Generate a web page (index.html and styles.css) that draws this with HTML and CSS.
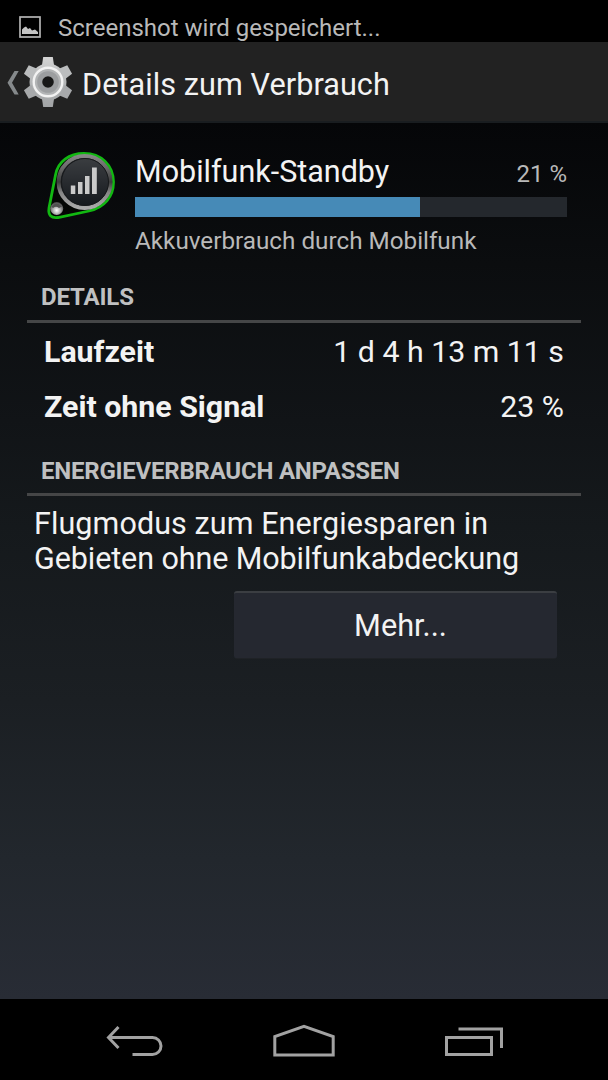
FILE: index.html
```html
<!DOCTYPE html>
<html lang="de">
<head>
<meta charset="utf-8">
<title>Details zum Verbrauch</title>
<link rel="stylesheet" href="styles.css">
</head>
<body>
<div class="screen">
  <div class="statusbar">
    <svg class="picture-icon" width="22" height="22" viewBox="0 0 22 22"><rect x="1" y="1" width="20" height="20" fill="none" stroke="#b4b4b4" stroke-width="1.7"/><path d="M3 18V13.500L5 11.500L7 10.500L9 13L11 12L13 14.500L16 13.500L19 16V18Z" fill="#c4c4c4"/></svg>
    <span class="status-text">Screenshot wird gespeichert...</span>
  </div>
  <header class="actionbar">
    <svg class="up-icon" width="12" height="26" viewBox="0 0 12 26"><path d="M7.500 1H11.700L5 12.700L11.700 24.500H7.500L.500 12.700Z" fill="#85898b"/></svg>
    <svg class="gear" width="50" height="52" viewBox="-25 -26 50 52">
      <defs>
        <linearGradient id="metal" gradientUnits="userSpaceOnUse" x1="0" y1="-25" x2="0" y2="25"><stop offset="0" stop-color="#d5d5d5"/><stop offset=".5" stop-color="#b4b6b7"/><stop offset="1" stop-color="#a2a4a6"/></linearGradient>
        <path id="tooth" d="M-6 -16L-4.800 -25H4.800L6 -16Z"/>
      </defs>
      <g fill="url(#metal)"><circle r="18.500"/><path d="M-6 -17L-4.800 -25H4.800L6 -17V17L4.800 25H-4.800L-6 17Z"/></g>
      <g fill="#bbbdbe"><use href="#tooth" transform="rotate(60)"/><use href="#tooth" transform="rotate(-60)"/></g>
      <g fill="#a7a9ab"><use href="#tooth" transform="rotate(120)"/><use href="#tooth" transform="rotate(-120)"/></g>
      <circle r="14.300" fill="#b2b4b5" stroke="#f2f2f2" stroke-width="2.400"/>
      <circle r="8.300" fill="none" stroke="#9c9ea0" stroke-width="5"/>
      <circle r="5.800" fill="#181818"/>
    </svg>
    <h1 class="title">Details zum Verbrauch</h1>
  </header>
  <main class="content">
    <section class="summary">
      <svg class="app-icon" width="70" height="70" viewBox="0 0 70 70">
        <defs>
          <linearGradient id="rim" x1="0" y1="0" x2="0" y2="1"><stop offset="0" stop-color="#868686"/><stop offset=".25" stop-color="#666"/><stop offset=".5" stop-color="#3c3c3c"/><stop offset=".7" stop-color="#858585"/><stop offset="1" stop-color="#aaa"/></linearGradient>
          <linearGradient id="dial" x1="0" y1="0" x2="0" y2="1"><stop offset="0" stop-color="#3a3d40"/><stop offset=".4" stop-color="#2c2f33"/><stop offset="1" stop-color="#15191d"/></linearGradient>
          <radialGradient id="knob" cx=".5" cy=".65" r=".6"><stop offset="0" stop-color="#fff"/><stop offset=".4" stop-color="#bbb"/><stop offset="1" stop-color="#4d4d4d"/></radialGradient>
        </defs>
        <path d="M9.500 24C12 10.500 23 2.500 38 2.500C55 2.500 67 14 67.500 31C67.500 46 58 56.500 43 60L12 66.500C5 67.500 2 64 3 57Z" fill="#040604" stroke="#12b812" stroke-width="2.800"/>
        <circle cx="38.600" cy="31" r="26" fill="#202327" stroke="url(#rim)" stroke-width="4"/>
        <circle cx="39" cy="31" r="23.500" fill="url(#dial)" stroke="#17191b" stroke-width="1"/>
        <g fill="#cacaca"><rect x="24.800" y="34.500" width="4.500" height="8.500"/><rect x="32" y="31" width="4.500" height="12"/><rect x="39" y="25" width="4.500" height="18"/><rect x="46" y="16.500" width="4.800" height="26.500"/></g>
        <circle cx="10.700" cy="57.500" r="6.500" fill="url(#knob)"/>
        <path d="M5.500 55.500Q10.500 49.500 16 55.500L13 57Q10 54.500 7 57Z" fill="#505050"/>
      </svg>
      <div class="usage">
        <div class="usage-head"><span class="usage-name">Mobilfunk-Standby</span><span class="usage-percent">21 %</span></div>
        <div class="progress"><div class="progress-fill" style="width:66%"></div></div>
        <p class="usage-note">Akkuverbrauch durch Mobilfunk</p>
      </div>
    </section>
    <h2 class="section-title">DETAILS</h2>
    <dl class="details">
      <div class="detail-row"><dt>Laufzeit</dt><dd>1 d 4 h 13 m 11 s</dd></div>
      <div class="detail-row"><dt>Zeit ohne Signal</dt><dd>23 %</dd></div>
    </dl>
    <h2 class="section-title energy-title">ENERGIEVERBRAUCH ANPASSEN</h2>
    <p class="advice"><span class="advice-first">Flugmodus zum Energiesparen in</span><br><span class="advice-second">Gebieten ohne Mobilfunkabdeckung</span></p>
    <button class="more">Mehr...</button>
  </main>
  <nav class="navbar">
    <svg width="58" height="34" viewBox="0 0 58 34"><path d="M12.500 3L2.500 13.500L12.500 24M3 13.500H46.500A8.500 8.500 0 0 1 46.500 30.500H26.500" fill="none" stroke="#a2a2a2" stroke-width="3"/></svg>
    <svg width="62" height="34" viewBox="0 0 62 34"><path d="M1.800 31V12.500L31 2.300L60.200 12.500V31Z" fill="none" stroke="#a2a2a2" stroke-width="3"/></svg>
    <svg width="59" height="34" viewBox="0 0 59 34"><path d="M2.500 13.500H47.500V30.500H2.500ZM14.500 5H57.500V24" fill="none" stroke="#a2a2a2" stroke-width="3"/></svg>
  </nav>
</div>
</body>
</html>
```
FILE: styles.css
```css
* { box-sizing: border-box; margin: 0; padding: 0; }
body { background: #000; font-family: Roboto, "Noto Sans", sans-serif; color: #f3f3f3; }
.screen { width: 608px; height: 1080px; display: flex; flex-direction: column; overflow: hidden; }
.statusbar { height: 42px; background: #000; display: flex; align-items: flex-start; padding: 16px 0 0 19px; gap: 17px; }
.status-text { font-size: 24px; line-height: 28px; margin-top: -2px; color: #b9b9b9; white-space: nowrap; }
.actionbar { height: 81px; background: #222; border-bottom: 2px solid #191d20; display: flex; align-items: center; padding-left: 7px; }
.up-icon { margin-top: 2px; }
.gear { margin-left: 4px; margin-top: 1px; }
.title { font-size: 30.6px; letter-spacing: .07px; line-height: 36px; font-weight: 400; margin: 6px 0 0 9px; white-space: nowrap; }
.content { height: 876px; flex: none; padding: 28px 27px 0; background: linear-gradient(#050608 0, #0b0d0f 16%, #111417 34%, #15191c 46%, #1b1f23 66%, #22272d 84%, #282c35 100%); }
.summary { display: flex; height: 127px; padding: 0 14px 0 19px; }
.app-icon { flex: none; }
.usage { width: 432px; margin-left: 19px; }
.usage-head { display: flex; justify-content: space-between; align-items: baseline; height: 46px; white-space: nowrap; }
.usage-name { font-size: 30.5px; line-height: 41px; }
.usage-percent { font-size: 24px; color: #b9b9b9; }
.progress { height: 20px; background: #24282d; }
.progress-fill { height: 100%; background: #468ab7; }
.usage-note { font-size: 24.25px; line-height: 28px; margin-top: 10px; color: #b9b9b9; white-space: nowrap; }
.section-title { height: 45px; border-bottom: 3px solid #454647; padding: 5px 14px 0; font-size: 24px; letter-spacing: -.15px; line-height: 28px; font-weight: 700; color: #bfc0c1; white-space: nowrap; }
.energy-title { padding-top: 6px; letter-spacing: -.23px; }
.details { padding: 1px 17px 0; height: 128px; }
.detail-row { display: flex; justify-content: space-between; height: 55px; align-items: center; font-size: 30.3px; white-space: nowrap; }
.detail-row dt { font-weight: 700; }
.advice { font-size: 30.5px; line-height: 35px; padding: 10px 7px 0; white-space: nowrap; }
.advice-first { letter-spacing: .09px; }
.advice-second { letter-spacing: -.09px; }
.more { display: block; width: 323px; height: 68px; margin: 15px 0 0 207px; border: 0; border-top: 2px solid #3b3e42; border-bottom: 1px solid #1f2226; border-radius: 3px; background: #252830; color: #f3f3f3; font: 400 30.7px/36px Roboto, sans-serif; padding-left: 10px; }
.navbar { height: 81px; background: #000; display: flex; align-items: flex-start; justify-content: space-between; padding: 25px 105px 0 106px; }
```
